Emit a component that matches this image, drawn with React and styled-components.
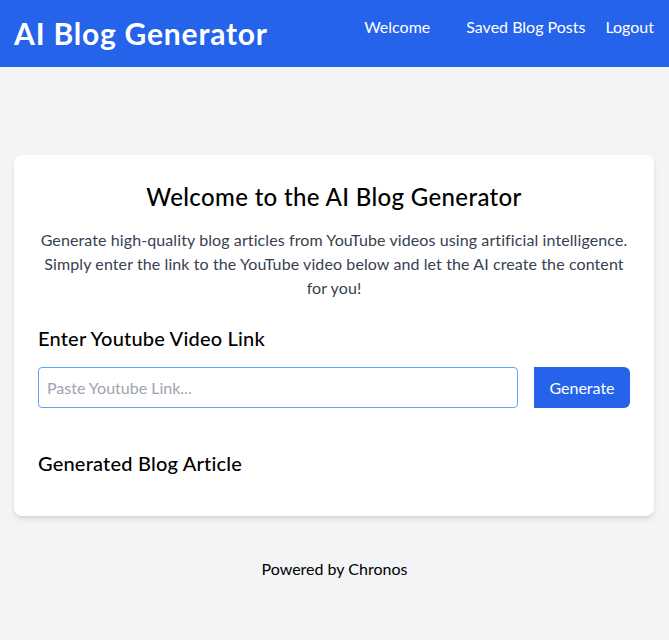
import React from 'react';
import styled, {createGlobalStyle} from 'styled-components';

const GlobalStyle = createGlobalStyle`
    html, body {
        margin: 0;
        padding: 0;
        background: #f3f4f6;
        font-family: Lato, "Noto Sans", sans-serif;
        color: #000;
    }
    * {
        box-sizing: border-box;
    }
`;

const Page = styled.div`
    min-height: 640px;
    display: flex;
    flex-direction: column;
`;

const Header = styled.header`
    background: #2563eb;
    color: white;
    padding: 15px 15px 16px 14px;
    display: flex;
    justify-content: space-between;
    align-items: flex-start;
`;

const Brand = styled.h1`
    margin: 0;
    font-size: 30px;
    line-height: 36px;
    font-weight: 700;
    letter-spacing: 0.8px;
`;

const Nav = styled.nav`
    display: flex;
`;

const NavLink = styled.a`
    color: white;
    text-decoration: none;
    font-size: 16px;
    line-height: 24px;
    margin-left: ${p => p.$gap}px;
`;

const Main = styled.main`
    padding: 88px 15px 0 14px;
`;

const Card = styled.section`
    background: white;
    border-radius: 8px;
    box-shadow: 0 4px 6px -1px rgba(0,0,0,0.1), 0 2px 4px -2px rgba(0,0,0,0.1);
    padding: 24px 24px 39px;
`;

const Heading = styled.h2`
    margin: 2px 0 15px;
    text-align: center;
    font-size: 24px;
    line-height: 32px;
    font-weight: 500;
    letter-spacing: 0.35px;
`;

const Intro = styled.p`
    margin: 0;
    text-align: center;
    color: #374151;
    font-size: 16px;
    line-height: 24px;
    letter-spacing: 0.1px;
`;

const SectionTitle = styled.h3`
    margin: ${p => p.$top}px 0 0;
    font-size: 20px;
    line-height: 28px;
    font-weight: 500;
    letter-spacing: 0.2px;
`;

const LinkRow = styled.div`
    display: flex;
    gap: 16px;
    margin-top: 15px;
`;

const LinkInput = styled.input`
    flex: 1;
    height: 41px;
    border: 1px solid #60a5fa;
    border-radius: 4px;
    padding: 0 8px;
    font-family: inherit;
    font-size: 16px;
    color: #111827;
    outline: none;

    &::placeholder {
        color: #9ca3af;
    }
`;

const GenerateButton = styled.button`
    width: 96px;
    height: 41px;
    border: none;
    border-radius: 0 6px 6px 0;
    background: #2563eb;
    color: white;
    font-family: inherit;
    font-size: 16px;
    cursor: pointer;
`;

const Footer = styled.footer`
    text-align: center;
    padding: 41px 0 0;
    font-size: 16px;
    line-height: 24px;
`;

export default function App() {
    return (
        <Page>
            <GlobalStyle/>
            <Header>
                <Brand>AI Blog Generator</Brand>
                <Nav>
                    <NavLink href="#" $gap={0}>Welcome</NavLink>
                    <NavLink href="#" $gap={36}>Saved Blog Posts</NavLink>
                    <NavLink href="#" $gap={20}>Logout</NavLink>
                </Nav>
            </Header>
            <Main>
                <Card>
                    <Heading>Welcome to the AI Blog Generator</Heading>
                    <Intro>
                        Generate high-quality blog articles from YouTube videos using artificial intelligence.
                        Simply enter the link to the YouTube video below and let the AI create the content
                        for you!
                    </Intro>
                    <SectionTitle $top={24}>Enter Youtube Video Link</SectionTitle>
                    <LinkRow>
                        <LinkInput type="text" placeholder="Paste Youtube Link..."/>
                        <GenerateButton>Generate</GenerateButton>
                    </LinkRow>
                    <SectionTitle $top={41}>Generated Blog Article</SectionTitle>
                </Card>
            </Main>
            <Footer>Powered by Chronos</Footer>
        </Page>
    );
}
